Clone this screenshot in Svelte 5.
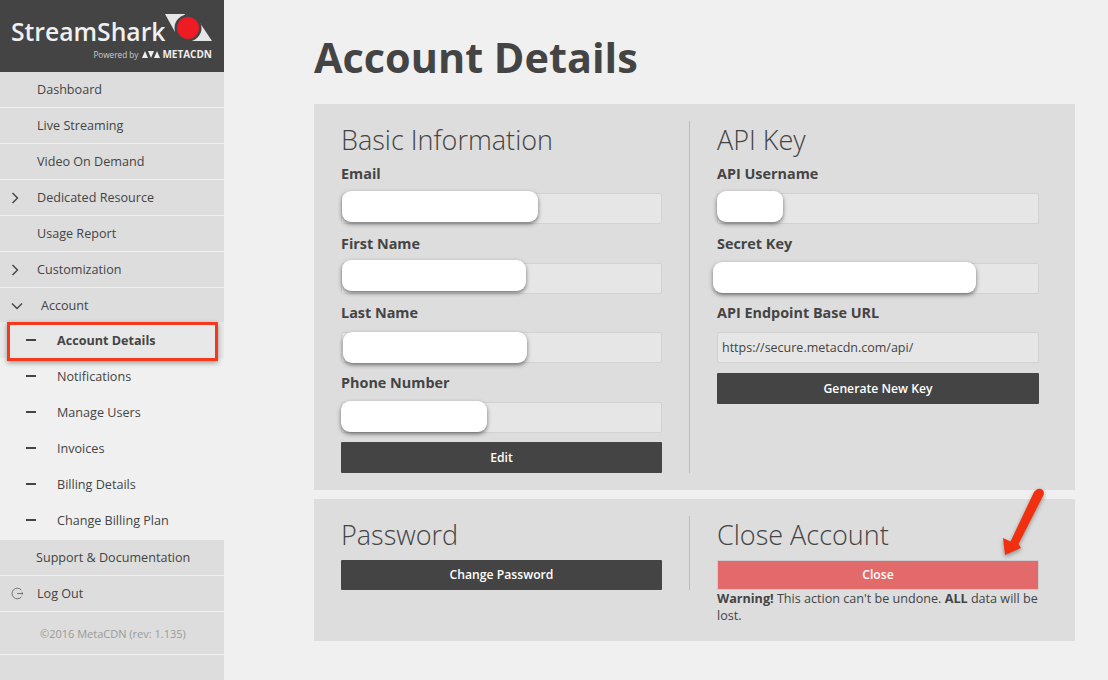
<script>
  const nav = [
    { label: 'Dashboard' },
    { label: 'Live Streaming' },
    { label: 'Video On Demand' },
    { label: 'Dedicated Resource', icon: 'right' },
    { label: 'Usage Report' },
    { label: 'Customization', icon: 'right' },
    { label: 'Account', icon: 'down' }
  ];
  const sub = ['Account Details', 'Notifications', 'Manage Users', 'Invoices', 'Billing Details', 'Change Billing Plan'];
  const basic = [
    { label: 'Email', w: 196, x: 0, y: -3 },
    { label: 'First Name', w: 184, x: 0, y: -4 },
    { label: 'Last Name', w: 184, x: 1, y: -1 },
    { label: 'Phone Number', w: 146, x: -1, y: -2 }
  ];
</script>

<div class="page">
  <aside class="side">
    <div class="brand">
      <div class="brand-top">
        <span class="brand-name">StreamShark</span>
        <svg class="mark" width="48" height="28" viewBox="0 0 48 28">
          <path d="M1 0 H21 L11 18 Z" fill="#e6e6e6"/>
          <path d="M36 9 L48 27 H26 Z" fill="#e6e6e6"/>
          <circle cx="24" cy="14" r="13.5" fill="#444"/>
          <circle cx="24" cy="14" r="11" fill="#ed1c24"/>
        </svg>
      </div>
      <div class="powered">
        <span class="pw">Powered by</span>
        <svg width="18" height="7" viewBox="0 0 18 7"><path d="M0 7 L3 0 L6 7 Z M6 0 H12 L9 7 Z M12 7 L15 0 L18 7 Z" fill="#eee"/></svg>
        <span class="meta">METACDN</span>
      </div>
    </div>
    <nav>
      {#each nav as item}
        <div class="item" class:open={item.icon === 'down'}>
          {#if item.icon === 'right'}
            <svg class="ico" width="8" height="12" viewBox="0 0 8 12"><path d="M1.5 1 L6.5 6 L1.5 11" fill="none" stroke="#444" stroke-width="1.4"/></svg>
          {:else if item.icon === 'down'}
            <svg class="ico" width="12" height="8" viewBox="0 0 12 8"><path d="M1 1.5 L6 6.5 L11 1.5" fill="none" stroke="#444" stroke-width="1.4"/></svg>
          {/if}
          <span>{item.label}</span>
        </div>
      {/each}
      <div class="subs">
        {#each sub as s, i}
          <div class="sub" class:current={i === 0}>
            <i class="dash"></i><span>{s}</span>
            {#if i === 0}<div class="mark-box"></div>{/if}
          </div>
        {/each}
      </div>
      <div class="item support"><span>Support &amp; Documentation</span></div>
      <div class="item logout">
        <svg class="ico" width="13" height="13" viewBox="0 0 13 13"><path d="M10.3 3 A5.3 5.3 0 1 0 10.3 10 M6 6.5 H12 M10.6 5.2 L12 6.5 L10.6 7.8" fill="none" stroke="#666" stroke-width="0.9"/></svg>
        <span>Log Out</span>
      </div>
      <div class="copy">©2016 MetaCDN (rev: 1.135)</div>
    </nav>
  </aside>

  <main class="main">
    <h1>Account Details</h1>
    <section class="card top">
      <div class="col left">
        <h2>Basic Information</h2>
        {#each basic as f}
          <div class="field">
            <div class="label">{f.label}</div>
            <div class="input"><div class="blot" style="width:{f.w}px;left:{f.x}px;top:{f.y}px"></div></div>
          </div>
        {/each}
        <button class="btn edit">Edit</button>
      </div>
      <div class="col right">
        <h2>API Key</h2>
        <div class="field">
          <div class="label">API Username</div>
          <div class="input"><div class="blot" style="width:66px;left:-1px;top:-3px"></div></div>
        </div>
        <div class="field">
          <div class="label">Secret Key</div>
          <div class="input"><div class="blot" style="width:263px;left:-5px;top:-2px"></div></div>
        </div>
        <div class="field">
          <div class="label">API Endpoint Base URL</div>
          <div class="input">https://secure.metacdn.com/api/</div>
        </div>
        <button class="btn gen">Generate New Key</button>
      </div>
    </section>
    <section class="card bottom">
      <div class="col left">
        <h2>Password</h2>
        <button class="btn short">Change Password</button>
      </div>
      <div class="col right">
        <h2>Close Account</h2>
        <button class="btn short danger">Close</button>
        <p class="warn"><b>Warning!</b> This action can't be undone. <b>ALL</b> data will be lost.</p>
        <svg class="arrow" width="50" height="76" viewBox="0 0 50 76">
          <path d="M36 3 C40 2 43 5 41.5 9 L16.5 58 L19 62 L3 69 L1 52 L8.5 55.5 L32 6 C33 4.5 34.5 3.5 36 3 Z" fill="#f0300f"/>
        </svg>
      </div>
    </section>
  </main>
</div>

<style>
  :global(body) {
    margin: 0;
    background: #f0f0f0;
    font-family: "Open Sans", "Liberation Sans", sans-serif;
    color: #444;
  }
  .page {
    display: flex;
    width: 1108px;
    height: 680px;
    overflow: hidden;
  }
  .side {
    width: 224px;
    flex: none;
    background: #ddd;
  }
  .brand {
    height: 72px;
    background: #444;
    box-sizing: border-box;
    padding: 14px 12px 0 11px;
    color: #f0f0f0;
  }
  .brand-top {
    display: flex;
    align-items: flex-start;
    justify-content: space-between;
    height: 34px;
  }
  .brand-name {
    font-size: 24.7px;
    font-weight: 600;
    line-height: 36px;
    white-space: nowrap;
  }
  .mark {
    flex: none;
    margin-left: -10px;
  }
  .powered {
    display: flex;
    justify-content: flex-end;
    align-items: center;
    gap: 2px;
    height: 12px;
  }
  .pw {
    font-size: 8.2px;
    color: #ccc;
    margin-right: 2px;
  }
  .meta {
    font-size: 10px;
    font-weight: 700;
    color: #eee;
  }
  .item {
    position: relative;
    height: 36px;
    box-sizing: border-box;
    border-bottom: 1px solid #f0f0f0;
    padding-left: 37px;
    font-size: 12.6px;
    line-height: 35px;
    color: #444;
  }
  .item.open {
    padding-left: 41px;
    height: 34px;
    border-bottom: 0;
  }
  .support { padding-left: 36px; }
  .ico {
    position: absolute;
    left: 11px;
    top: 12px;
  }
  .open .ico {
    top: 14px;
  }
  .logout .ico {
    top: 11px;
  }
  .subs {
    background: #f0f0f0;
    padding-bottom: 2px;
  }
  .sub {
    position: relative;
    height: 36px;
    display: flex;
    align-items: center;
    font-size: 12.6px;
    color: #444;
    padding-left: 26px;
    box-sizing: border-box;
  }
  .sub.current {
    font-weight: 700;
    background: #e8e8e8;
  }
  .dash {
    width: 10px;
    height: 1.5px;
    background: #444;
    margin-right: 21px;
  }
  .mark-box {
    position: absolute;
    left: 7px;
    top: 0;
    width: 211px;
    height: 39px;
    box-sizing: border-box;
    border: 3px solid #f5391c;
    box-shadow: 0 2px 5px rgba(0, 0, 0, .35);
  }
  .copy {
    height: 43px;
    box-sizing: border-box;
    border-bottom: 1px solid #f0f0f0;
    padding-left: 40px;
    font-size: 11px;
    line-height: 43px;
    color: #999;
  }
  .main {
    flex: none;
    width: 761px;
    margin-left: 90px;
  }
  h1 {
    margin: 0;
    height: 104px;
    box-sizing: border-box;
    padding-top: 30px;
    font-size: 41.4px;
    line-height: 54px;
    font-weight: 700;
    color: #444;
  }
  .card {
    background: #ddd;
    display: grid;
    grid-template-columns: 375px 1fr;
    padding: 17px 36px 17px 27px;
    box-sizing: border-box;
  }
  .top { height: 386px; }
  .bottom { height: 142px; margin-top: 9px; }
  .left {
    width: 321px;
    position: relative;
  }
  .left::after {
    content: "";
    position: absolute;
    left: 348px;
    top: 0;
    bottom: 0;
    width: 1px;
    background: #bbb;
  }
  .bottom .left::after { bottom: 34px; }
  .col.right { position: relative; min-width: 0; width: 322px; margin-left: 1px; }
  h2 {
    margin: 0;
    height: 42px;
    font-size: 27px;
    line-height: 38px;
    font-weight: 300;
    color: #444;
  }
  .bottom h2 { height: 44px; }
  .field {
    margin-bottom: 8.5px;
  }
  .label {
    height: 20px;
    margin-bottom: 10px;
    font-size: 14.4px;
    font-weight: 700;
    line-height: 22px;
  }
  .input {
    position: relative;
    height: 31px;
    box-sizing: border-box;
    border: 1px solid #d2d2d2;
    border-radius: 2px;
    background: #e6e6e6;
    font-size: 12.5px;
    line-height: 29px;
    padding-left: 4px;
    color: #444;
  }
  .blot {
    position: absolute;
    height: 31px;
    background: #fff;
    border-radius: 9px;
    box-shadow: 0 2px 4px rgba(0, 0, 0, .5);
  }
  .btn {
    display: block;
    width: 100%;
    height: 31px;
    border: 0;
    border-radius: 1px;
    background: #444;
    color: #fff;
    font-family: inherit;
    font-size: 12.2px;
    font-weight: 600;
    padding: 0;
  }
  .short { height: 30px; padding-bottom: 2px; }
  .edit { margin-top: 9px; }
  .gen { margin-top: 10px; }
  .danger {
    background: #e36a6a;
    border: 1px solid #ccc;
  }
  .warn {
    margin: 0 -5px 0 0;
    font-size: 12.6px;
    line-height: 17px;
    color: #444;
  }
  .arrow {
    position: absolute;
    left: 285px;
    top: -30px;
    overflow: visible;
    filter: drop-shadow(0 2px 2px rgba(0, 0, 0, .35));
  }
</style>
